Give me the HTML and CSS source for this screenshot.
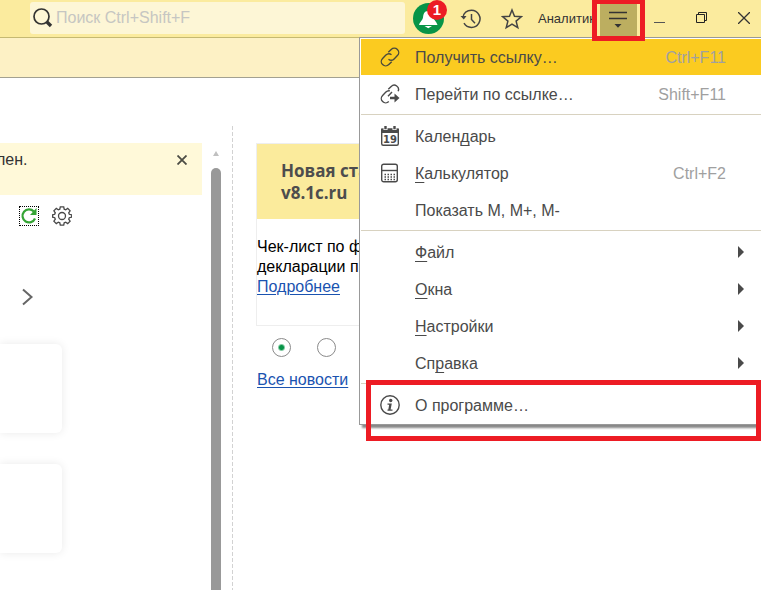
FILE: index.html
```html
<!DOCTYPE html>
<html lang="ru">
<head>
<meta charset="utf-8">
<title>1С:Предприятие</title>
<link rel="stylesheet" href="styles.css">
</head>
<body>
<header class="topbar">
  <label class="search">
    <svg width="20" height="20" viewBox="0 0 20 20" fill="none" stroke="#333"><circle cx="8.5" cy="8.5" r="7.5" stroke-width="1.7"/><path d="M14 14l4 4" stroke-width="3.4"/></svg>
    <input type="text" aria-label="Поиск" placeholder="Поиск Ctrl+Shift+F">
  </label>
  <div class="tools">
    <button class="bell" aria-label="Уведомления">
      <svg width="32" height="37" viewBox="0 0 32 37"><circle cx="15.500" cy="18.500" r="15.500" fill="#079447"/><path d="M15 11c-4 0-4.500 3-5 6.500-.5 3-3 4-4 7.500h18.500c-1-3.500-3.500-4.500-4-7.500C20 14 19 11 15 11zM11.500 26h7.500l-3.700 2.200z" fill="#fff"/></svg>
      <span class="badge">1</span>
    </button>
    <button class="tool" aria-label="История"><svg width="22" height="22" viewBox="0 0 22 22" fill="none" stroke="#444" stroke-width="1.500"><path d="M3 9.500C3.500 5 7 2.200 11.500 2.200a8.600 8.600 0 1 1-7.500 13M11.500 6v5.500l3.500 3.700"/><path d="M.5 8h6l-2.700 3.500z" fill="#444" stroke="none"/></svg></button>
    <button class="tool" aria-label="Избранное"><svg width="22" height="22" viewBox="0 0 22 22" fill="none" stroke="#444" stroke-width="1.500"><path d="M11 2l2.500 6.300 6.800.4-5.200 4.400 1.700 6.600-5.800-3.600-5.800 3.600 1.700-6.600-5.200-4.400 6.800-.4z"/></svg></button>
    <span class="user">Аналитик</span>
    <button class="menu-button" aria-label="Меню"><svg width="18" height="18" viewBox="0 0 18 18"><path d="M0 2.500h18M0 8.500h18" stroke="#333" stroke-width="1.300"/><path d="M5.500 14h7L9 17.700z" fill="#333"/></svg></button>
    <div class="window-buttons">
      <button aria-label="Свернуть"><svg width="12" height="12" viewBox="0 0 12 12"><path d="M0 10.500h11" stroke="#555"/></svg></button>
      <button aria-label="Развернуть"><svg width="12" height="12" viewBox="0 0 12 12" fill="none" stroke="#222"><path d="M.5 2.500h8v8h-8zM2.500 2.500v-2h8v8h-2"/></svg></button>
      <button aria-label="Закрыть"><svg width="12" height="12" viewBox="0 0 12 12"><path d="M0 0l12 12M12 0L0 12" stroke="#333" stroke-width="1.300"/></svg></button>
    </div>
  </div>
</header>
<div class="band"></div>

<main class="workspace">
  <section class="left">
    <div class="notice"><span>лен.</span><button aria-label="Закрыть уведомление"><svg width="10" height="10" viewBox="0 0 10 10"><path d="M.5.5l9 9M9.500.5l-9 9" stroke="#4c4c44" stroke-width="1.800"/></svg></button></div>
    <div class="actions">
      <button class="refresh" aria-label="Обновить"><svg width="18" height="18" viewBox="0 0 18 18"><path d="M15 11.500A6.500 6.500 0 1 1 13.800 4.500" fill="none" stroke="#35a435" stroke-width="2.200"/><path d="M16.500 1v7H10z" fill="#35a435"/></svg></button>
      <button aria-label="Настройки"><svg width="20" height="20" viewBox="0 0 20 20" fill="none" stroke="#484848" stroke-width="1.300"><circle cx="10" cy="10" r="3.500"/><path d="M8.300.8h3.400l.5 2.400 1.500.6 2-1.400 2.400 2.400-1.400 2 .6 1.500 2.400.5v2.400l-2.400.5-.6 1.500 1.400 2-2.400 2.400-2-1.400-1.500.6-.5 2.400H8.300l-.5-2.400-1.500-.6-2 1.400-2.400-2.400 1.400-2-.6-1.500L.6 11.200V8.800L2.700 8.300l.6-1.500-1.400-2 2.400-2.400 2 1.400 1.500-.6z"/></svg></button>
    </div>
    <button class="next" aria-label="Далее"><svg width="12" height="18" viewBox="0 0 12 18"><path d="M1 1.500L9.500 9 1 16.500" fill="none" stroke="#666" stroke-width="2"/></svg></button>
    <div class="card"></div>
    <div class="card"></div>
  </section>
  <div class="scroll"><span class="scroll-up"></span><span class="thumb"></span></div>
  <section class="news">
    <article>
      <h2>Новая ста<br>v8.1c.ru</h2>
      <p>Чек-лист по ф<br>декларации п<br><a href="#more">Подробнее</a></p>
    </article>
    <div class="pager">
      <input type="radio" name="news" aria-label="Новость 1" checked>
      <input type="radio" name="news" aria-label="Новость 2">
    </div>
    <a href="#all">Все новости</a>
  </section>
</main>

<nav class="menu">
  <button class="item selected"><svg width="20" height="20" viewBox="0 0 20 20" fill="none" stroke="#4a4a3c" stroke-width="1.400"><path d="M8.300 5.300l2.900-2.900a4.300 4.300 0 0 1 6.200 6.200l-3.300 3.300a4.300 4.300 0 0 1-5.600.4M11.700 14.700l-2.900 2.900a4.300 4.300 0 0 1-6.200-6.200l3.300-3.300a4.300 4.300 0 0 1 5.600-.4"/></svg><span>Получить ссылку…</span><kbd>Ctrl+F11</kbd></button>
  <button class="item"><svg width="20" height="20" viewBox="0 0 20 20" fill="none" stroke="#4a4a4a" stroke-width="1.400"><path d="M8.300 5.300l2.900-2.900a4.300 4.300 0 0 1 6.900 4.900M8.800 17.600a4.300 4.300 0 0 1-6.200-6.200l3.300-3.300a4.300 4.300 0 0 1 4-1.200M8 12.300l4-4.300"/><path d="M10 14h6" stroke-width="2.500"/><path d="M14.500 9.500l5 4.500-5 4.500z" fill="#4a4a4a" stroke="none"/></svg><span>Перейти по ссылке…</span><kbd>Shift+F11</kbd></button>
  <hr>
  <button class="item"><svg width="20" height="20" viewBox="0 0 20 20"><rect x="1.700" y="3.200" width="16.600" height="16" rx="1.500" fill="#fff" stroke="#4a4a4a" stroke-width="1.400"/><path d="M1 2.500h18v4.500H1z" fill="#4a4a4a"/><path d="M5.500 0v4M14.500 0v4" stroke="#fff" stroke-width="4"/><path d="M5.500 0v3.200M14.500 0v3.200" stroke="#4a4a4a" stroke-width="2.400"/><text class="day" x="10" y="16.500" text-anchor="middle">19</text></svg><span>Кален<u>д</u>арь</span></button>
  <button class="item"><svg width="20" height="20" viewBox="0 0 20 20" fill="none" stroke="#4a4a4a"><rect x="1.700" y="1.200" width="15.600" height="17.600" rx="2" stroke-width="1.400"/><path d="M2 7.500h15" stroke-width="1.400"/><path d="M4.500 11.500h11M4.500 14h11M4.500 16.500h11" stroke-width="1.300" stroke-dasharray="1.500 1.500"/></svg><span><u>К</u>алькулятор</span><kbd>Ctrl+F2</kbd></button>
  <button class="item plain"><span>Показать M, M+, M-</span></button>
  <hr>
  <button class="item plain"><span><u>Ф</u>айл</span><i class="arrow"></i></button>
  <button class="item plain"><span><u>О</u>кна</span><i class="arrow"></i></button>
  <button class="item plain"><span><u>Н</u>астройки</span><i class="arrow"></i></button>
  <button class="item plain"><span>Сп<u>р</u>авка</span><i class="arrow"></i></button>
  <hr>
  <button class="item"><svg width="20" height="20" viewBox="0 0 20 20"><circle cx="10" cy="10" r="9.200" fill="none" stroke="#4a4a4a" stroke-width="1.400"/><circle cx="10.700" cy="5.500" r="1.700" fill="#4a4a4a"/><path d="M7.500 8.500h4.300l-1.200 6h1.900v1.300H7.500v-1.300h.8l.9-4.700H7.500z" fill="#4a4a4a"/></svg><span>О программе…</span></button>
</nav>
<div class="mark mark-button"></div>
<div class="mark mark-about"></div>
</body>
</html>
```
FILE: styles.css
```css
* { box-sizing: border-box; }
body {
  margin: 0;
  min-height: 100vh;
  display: flex;
  flex-direction: column;
  position: relative;
  overflow: hidden;
  background: #fff;
  font: 16px/20px "Liberation Sans", Arial, sans-serif;
  color: #333;
}
button {
  border: 0;
  padding: 0;
  background: none;
  font: inherit;
  color: inherit;
}
svg { display: block; flex: none; }
a { color: #1a53b0; text-underline-offset: 2px; }

.topbar {
  display: flex;
  height: 38px;
  padding-left: 30px;
  background: #fbeb9e;
  border-bottom: 1px solid #c5b972;
}
.search {
  flex: 1;
  height: 32px;
  margin-top: 2px;
  padding-left: 3px;
  display: flex;
  align-items: center;
  gap: 3px;
  border-radius: 3px;
  background: #fdf6d6;
}
.search input {
  flex: 1;
  min-width: 0;
  padding: 0;
  border: 0;
  background: none;
  font: inherit;
}
.search input::placeholder { color: #c6c6c2; }
.tools {
  display: flex;
  align-items: center;
  height: 37px;
  padding: 0 11px 0 8px;
}
.bell { position: relative; margin-right: 15px; }
.badge {
  position: absolute;
  top: 0;
  right: -2px;
  width: 20px;
  height: 20px;
  border-radius: 50%;
  background: #ec1c24;
  color: #fff;
  font: bold 15px/20px "Liberation Sans", Arial, sans-serif;
}
.tool { margin-right: 19px; }
.user {
  width: 62px;
  margin-left: -4px;
  font-size: 13px;
}
.menu-button {
  align-self: stretch;
  width: 37px;
  padding: 1px 1px 0 0;
  display: grid;
  place-items: center;
  background: #bcae60;
}
.window-buttons {
  display: flex;
  gap: 30px;
  margin-left: 17px;
  padding-bottom: 1px;
}

.band {
  height: 40px;
  background: #fdf1c5;
  border-bottom: 1px solid #a3a191;
}

.workspace { flex: 1; display: flex; padding-top: 48px; }
.left { width: 202px; padding-top: 17px; }
.notice {
  height: 52px;
  display: flex;
  justify-content: space-between;
  align-items: flex-start;
  padding: 7px 15px 0 0;
  background: #fff9d9;
}
.notice span { margin-left: -4px; }
.notice button { padding-top: 5px; }
.actions { display: flex; gap: 13px; padding: 11px 0 0 19px; }
.refresh { border: 1px dotted #000; }
.next { display: block; margin: 62px 0 38px 22px; }
.card {
  width: 62px;
  height: 89px;
  margin-bottom: 31px;
  border-radius: 0 6px 6px 0;
  box-shadow: 0 0 10px rgba(0, 0, 0, .09);
}
.scroll {
  width: 31px;
  padding: 25px 0 0 9px;
  display: flex;
  flex-direction: column;
  background: repeating-linear-gradient(#d2d2d2 0 4px, #fff 4px 6px) right / 1px 100% no-repeat;
}
.scroll-up {
  width: 6px;
  height: 5px;
  margin: 0 0 12px 2px;
  background: #c0c0c0;
  clip-path: polygon(50% 0, 100% 100%, 0 100%);
}
.thumb {
  flex: 1;
  width: 10px;
  border-radius: 5px 5px 0 0;
  background: #999;
}
.news { flex: 1; padding: 17px 0 0 23px; }
.news article {
  height: 183px;
  border: 1px solid #eee;
  color: #000;
}
.news h2 {
  margin: 0 0 18px;
  height: 75px;
  padding: 16px 0 0 24px;
  background: #fbeb9c;
  color: #4d4d4d;
  font: bold 17px/22px "Open Sans", sans-serif;
}
.news p { margin: 0; }
.pager { display: flex; gap: 26px; padding: 12px 0 13px 16px; }
.pager input {
  appearance: none;
  width: 19px;
  height: 19px;
  margin: 0;
  border: 1px solid #8a8a8a;
  border-radius: 50%;
}
.pager input:checked { background: radial-gradient(circle, #079447 2px, #fff 4px); }
.news > a { margin-left: 1px; }

.menu {
  position: absolute;
  top: 37px;
  right: 0;
  width: 402px;
  display: flex;
  flex-direction: column;
  gap: 1px;
  padding: 1px 0 1px 1px;
  background: #fff;
  border: 1px solid #999;
  border-right: 0;
  box-shadow: 3px 3px 2px #888;
  color: #4a4a4a;
}
.item {
  height: 36px;
  display: flex;
  align-items: center;
  gap: 15px;
  padding: 0 17px 0 19px;
  text-align: left;
}
.item span { flex: 1; padding-top: 2px; }
.item.plain { padding-left: 54px; }
.item.selected { background: #fbcb20; }
.item u { text-underline-offset: 3px; }
.item kbd {
  margin-right: 18px;
  padding-top: 2px;
  font: inherit;
  color: #a0a0a0;
}
.menu hr {
  width: 100%;
  height: 1px;
  margin: 1px 0 2px;
  border: 0;
  background: #d8d2c0;
}
.arrow {
  width: 6px;
  height: 12px;
  background: #4a4a4a;
  clip-path: polygon(0 0, 100% 50%, 0 100%);
}
.day { font: bold 10px "DejaVu Sans", sans-serif; fill: #4a4a4a; }
.mark {
  position: absolute;
  border: 5px solid #ed1c24;
  pointer-events: none;
}
.mark-button { top: -1px; right: 116px; width: 53px; height: 42px; }
.mark-about { top: 380px; right: 0; width: 395px; height: 61px; }
```
